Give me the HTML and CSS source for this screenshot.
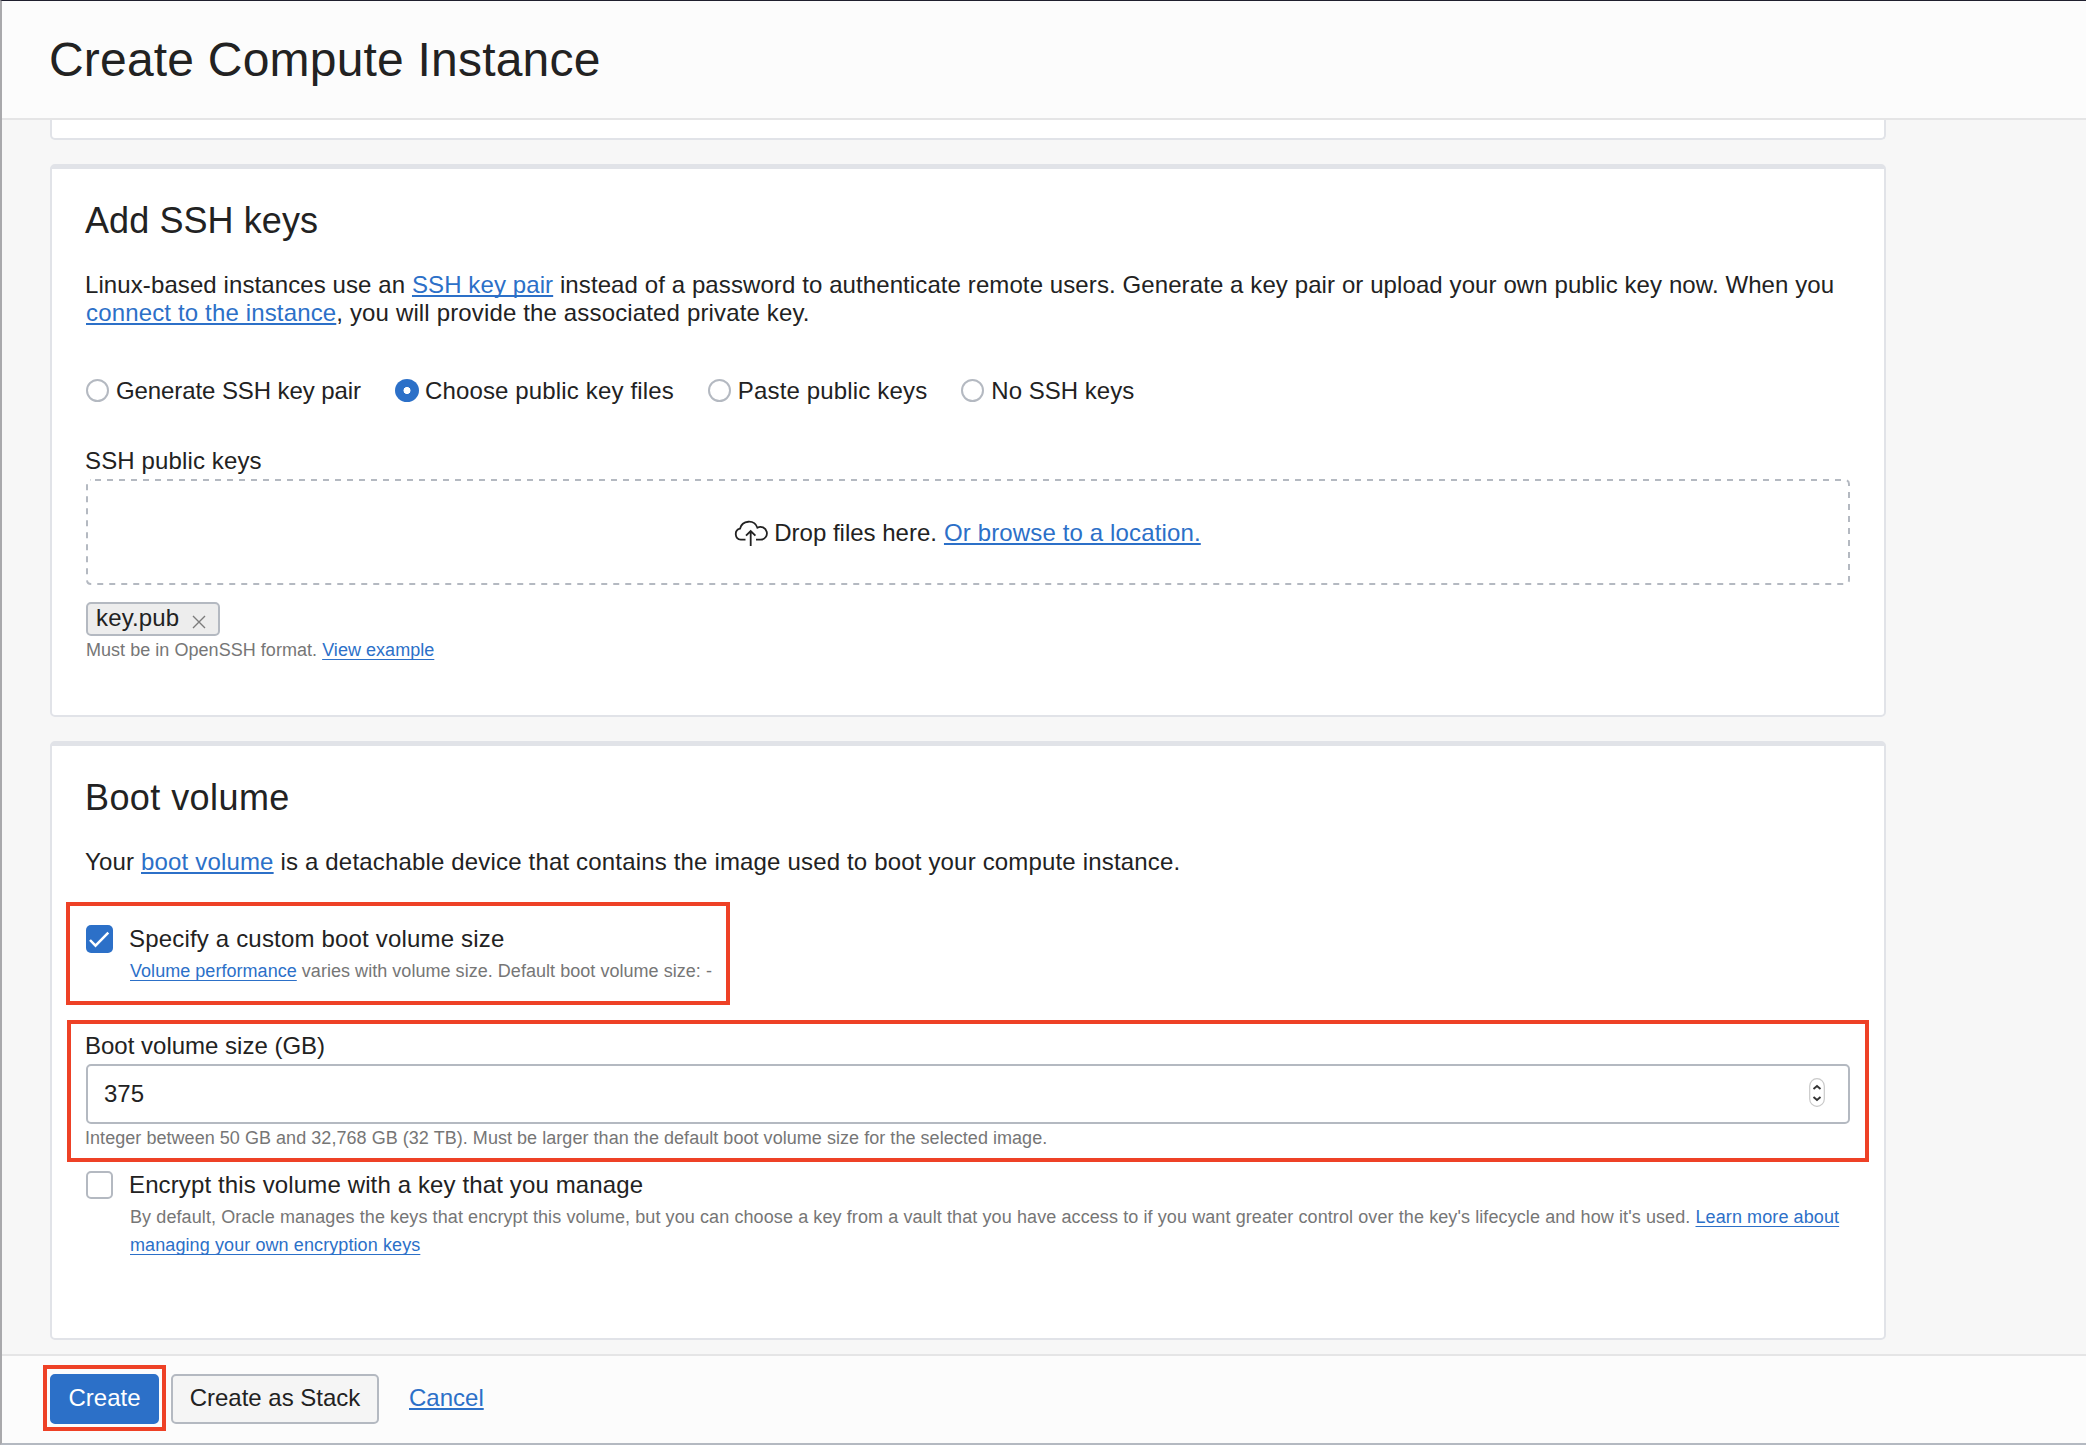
FILE: index.html
```html
<!DOCTYPE html>
<html lang="en">
<head>
<meta charset="utf-8">
<title>Create Compute Instance</title>
<link rel="stylesheet" href="styles.css">
</head>
<body>
<div class="drawer">
  <header class="header"><h1 class="title">Create Compute Instance</h1></header>
  <main class="content">
    <section class="card card-previous"></section>

    <section class="card card-ssh">
      <h2 class="heading">Add SSH keys</h2>
      <p class="intro"><span class="intro-first">Linux-based instances use an <a class="link" href="#">SSH key pair</a> instead of a password to authenticate remote users. Generate a key pair or upload your own public key now. When you</span><br><span class="intro-second"><a class="link" href="#">connect to the instance</a>, you will provide the associated private key.</span></p>
      <div class="radios">
        <label class="radio radio-generate"><span class="dot"></span>Generate SSH key pair</label>
        <label class="radio radio-choose"><span class="dot dot-on"></span>Choose public key files</label>
        <label class="radio radio-paste"><span class="dot"></span>Paste public keys</label>
        <label class="radio radio-none"><span class="dot"></span>No SSH keys</label>
      </div>
      <div class="label keys-label">SSH public keys</div>
      <div class="dropzone">
        <svg class="dropzone-outline" viewBox="0 0 1764 106" width="1764" height="106"><rect x="1" y="1" width="1762" height="104" rx="4" fill="none" stroke="#b4b9c1" stroke-width="2" stroke-dasharray="6 6" stroke-dashoffset="-4"/></svg>
        <svg class="cloud" viewBox="0 0 34 28" width="34" height="28"><path d="M11.500 20.700H6.800A5.600 5.600 0 0 1 6 9.700A9.100 9.100 0 0 1 23.400 8.700A6.400 6.400 0 1 1 26.500 20.700H22M16.700 27V12.500M12 16.700L16.700 12L21.400 16.700" fill="none" stroke="#222" stroke-width="1.800"/></svg>
        <span>Drop files here.</span>
        <a class="link browse" href="#">Or browse to a location.</a>
      </div>
      <div class="tag">key.pub<svg class="tag-close" viewBox="0 0 14 14" width="14" height="14"><path d="M1 1L13 13M13 1L1 13" stroke="#7c7c7c" stroke-width="1.400"/></svg></div>
      <div class="hint">Must be in OpenSSH format. <a class="link" href="#">View example</a></div>
    </section>

    <section class="card card-boot">
      <h2 class="heading boot-heading">Boot volume</h2>
      <p class="label boot-intro">Your <a class="link" href="#">boot volume</a> is a detachable device that contains the image used to boot your compute instance.</p>
      <div class="option option-size highlight">
        <svg class="check" viewBox="0 0 27 28" width="27" height="28"><rect width="27" height="28" rx="5" fill="#2c70c8"/><path d="M4 15L9.500 20.700L22.300 7.700" fill="none" stroke="#fff" stroke-width="2.500"/></svg>
        <div>
          <div class="label size-option-label">Specify a custom boot volume size</div>
          <div class="hint option-hint"><a class="link" href="#">Volume performance</a> varies with volume size. Default boot volume size: -</div>
        </div>
      </div>
      <div class="size-field highlight">
        <div class="label">Boot volume size (GB)</div>
        <div class="number">375
          <svg class="spinner" viewBox="0 0 16 29" width="16" height="29"><rect x=".700" y=".700" width="14.600" height="27.600" rx="7.300" fill="#fff" stroke="#c9c9c9" stroke-width="1.200"/><path d="M4.500 11L8 8L11.500 11M4.500 19L8 22L11.500 19" fill="none" stroke="#333" stroke-width="1.900"/></svg>
        </div>
        <div class="hint size-hint">Integer between 50 GB and 32,768 GB (32 TB). Must be larger than the default boot volume size for the selected image.</div>
      </div>
      <div class="option">
        <span class="check check-off"></span>
        <div>
          <div class="label encrypt-label">Encrypt this volume with a key that you manage</div>
          <div class="hint option-hint encrypt-hint">By default, Oracle manages the keys that encrypt this volume, but you can choose a key from a vault that you have access to if you want greater control over the key's lifecycle and how it's used. <a class="link" href="#">Learn more about<br>managing your own encryption keys</a></div>
        </div>
      </div>
    </section>
  </main>
  <footer class="footer">
    <button class="button button-primary highlight">Create</button>
    <button class="button">Create as Stack</button>
    <a class="link cancel" href="#">Cancel</a>
  </footer>
</div>
</body>
</html>
```
FILE: styles.css
```css
* { box-sizing: border-box; }
body {
  margin: 0;
  font-family: "Liberation Sans", Arial, sans-serif;
  font-size: 24px;
  line-height: 28px;
  color: #222;
  background: #fff;
}
h1, h2, p { margin: 0; font-weight: 400; }
svg { display: block; flex: none; }

.drawer {
  display: flex;
  flex-direction: column;
  height: 1445px;
  border-top: 1px solid #1f1f2e;
  border-left: 2px solid #a9a9ac;
  border-bottom: 2px solid #b4b9c1;
  background: #f7f7f7;
}
.header {
  height: 119px;
  flex: none;
  padding: 31px 0 0 47px;
  background: #fcfcfc;
  border-bottom: 2px solid #e5e5e6;
}
.title { font-size: 48px; line-height: 56px; letter-spacing: .2px; white-space: nowrap; }

.content { flex: 1; min-height: 0; padding-left: 48px; }
.card {
  width: 1836px;
  padding: 30px 34px 0;
  background: #fff;
  border: 2px solid #e1e3e8;
  border-top-width: 5px;
  border-radius: 5px;
  white-space: nowrap;
}
.card-previous { height: 20px; padding: 0; border-top: 0; border-radius: 0 0 5px 5px; }
.card-ssh { height: 553px; margin-top: 24px; }
.card-boot { height: 599px; margin-top: 24px; }

.heading { font-size: 36px; line-height: 44px; margin: 0 0 28px -1px; letter-spacing: .08px; }
.boot-heading { letter-spacing: .42px; }
.intro-first { margin-left: -1px; letter-spacing: .095px; }
.intro-second { letter-spacing: .15px; }
.label { margin-left: -1px; }
.link {
  color: #2c70c8;
  text-decoration: underline;
  text-decoration-thickness: 2px;
  text-underline-offset: 2px;
  text-decoration-skip-ink: none;
}
.hint { font-size: 18px; color: #767676; letter-spacing: .038px; }
.hint .link { text-decoration-thickness: 1px; text-underline-offset: 3px; }

.radios { display: flex; gap: 34px; margin-top: 50px; }
.radio { display: flex; align-items: center; gap: 7px; }
.radio-generate { letter-spacing: -.09px; }
.radio-choose { gap: 6px; letter-spacing: .15px; }
.radio-paste { letter-spacing: .16px; }
.radio-none { letter-spacing: .02px; }
.dot { width: 23px; height: 23px; margin-bottom: 1px; border: 2px solid #b4b9c1; border-radius: 50%; }
.dot-on { width: 24px; border: 0; background: radial-gradient(circle, #fff 3.2px, #2c70c8 3.8px); }

.keys-label { margin-top: 42px; letter-spacing: .13px; }
.dropzone {
  position: relative;
  display: flex;
  align-items: center;
  justify-content: center;
  gap: 7px;
  height: 106px;
  margin-top: 4px;
  padding: 2px 1px 0 0;
}
.dropzone-outline { position: absolute; inset: 0; }
.cloud { margin-right: -1px; }
.browse { letter-spacing: .14px; }
.tag {
  display: flex;
  width: 134px;
  height: 34px;
  margin-top: 17px;
  padding-left: 8px;
  letter-spacing: .14px;
  background: #ededed;
  border: 2px solid #b4b9c1;
  border-radius: 5px;
}
.tag-close { margin: 11px 0 0 13px; }

.highlight { position: relative; }
.highlight::after { content: ""; position: absolute; border: 4px solid #ee4126; }
.boot-intro { letter-spacing: .17px; }
.option { display: flex; gap: 17px; }
.option-size { width: 644px; margin-top: 49px; }
.option-size::after { inset: -23px 0 -20px -20px; }
.size-option-label { letter-spacing: .18px; }
.option-hint { margin-top: 4px; }
.check { flex: none; width: 27px; height: 28px; }
.check-off { border: 2px solid #b4b9c1; border-radius: 5px; }
.size-field { margin: 47px 0 19px; }
.size-field::after { inset: -12px -19px -10px -19px; }
.number {
  display: flex;
  align-items: center;
  justify-content: space-between;
  height: 60px;
  margin-top: 4px;
  padding: 0 23px 0 16px;
  border: 2px solid #b4b9c1;
  border-radius: 5px;
}
.spinner { margin-bottom: 3px; }
.size-hint { margin-left: -1px; letter-spacing: .043px; }
.encrypt-label { letter-spacing: .13px; }
.encrypt-hint { letter-spacing: .096px; }

.footer {
  display: flex;
  flex: none;
  height: 89px;
  padding: 18px 0 0 48px;
  background: #fcfcfc;
  border-top: 2px solid #e5e5e6;
}
.button {
  width: 208px;
  height: 50px;
  padding: 0 0 2px;
  font: inherit;
  color: #222;
  background: #f5f5f5;
  border: 2px solid #b4b9c1;
  border-radius: 5px;
  white-space: nowrap;
}
.button-primary { width: 109px; margin-right: 12px; color: #fff; background: #2c70c8; border-color: #2c70c8; }
.button-primary::after { inset: -11px -9px -9px -9px; }
.cancel { margin: 10px 0 0 30px; }
```
